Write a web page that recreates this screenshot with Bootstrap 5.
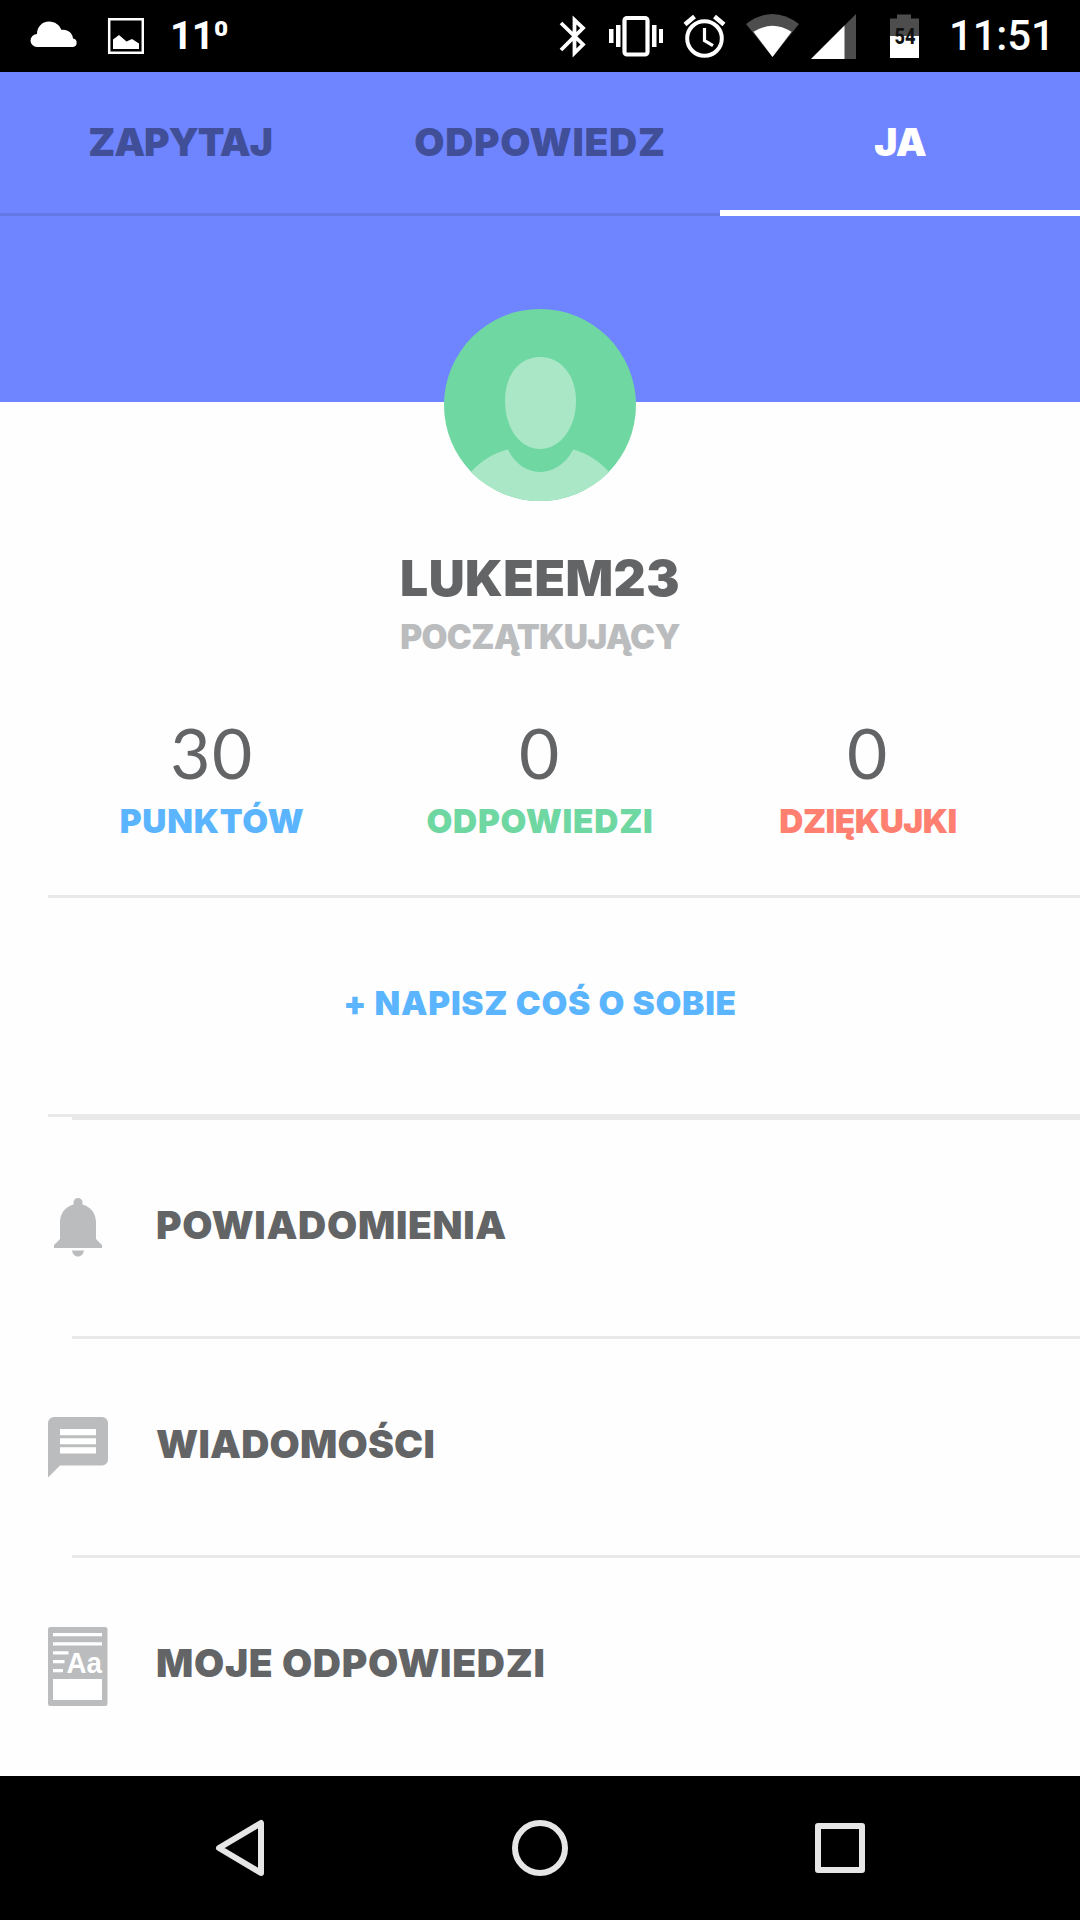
<!DOCTYPE html>
<html lang="pl">
<head>
<meta charset="utf-8">
<meta name="viewport" content="width=device-width, initial-scale=1">
<title>Profil</title>
<link href="https://cdn.jsdelivr.net/npm/bootstrap@5.3.0/dist/css/bootstrap.min.css" rel="stylesheet">
<style>
  body { font-family: "Inter", "Liberation Sans", sans-serif; background: #fefefe; color: #636466; }
  svg { display: block; flex: none; }
  .screen { width: 1080px; height: 1920px; overflow: hidden; }
  .statusbar { height: 72px; font-family: "Roboto", sans-serif; color: #fff; }
  .temp { font-size: 39.5px; font-weight: 700; line-height: 74px; margin-left: 26px; letter-spacing: -.8px; }
  .clock { font-size: 42px; font-weight: 500; line-height: 76px; margin-left: 29px; width: 103px; letter-spacing: -.2px; }
  .hero { height: 330px; background: #6f85ff; }
  .tabs-top { height: 144px; }
  .tabs-top .nav-link { height: 144px; padding: 0; line-height: 139px; font-size: 39px; font-weight: 900; color: #414f99; border-radius: 0; box-shadow: inset 0 -3px #6377e5; letter-spacing: -1.1px; }
  .tabs-top .nav-link.wide-caps { letter-spacing: .7px; }
  .tabs-top .nav-link.active { color: #fff; box-shadow: inset 0 -6px #fff; }
  .avatar { margin-top: -93px; }
  .user-name { font-size: 49.8px; font-weight: 900; line-height: 60px; margin: 47px 0 0; letter-spacing: .5px; }
  .user-rank { font-size: 33.6px; font-weight: 900; line-height: 40px; margin-top: 9px; color: #bbbcbe; letter-spacing: -.75px; }
  .stats { margin: 45px 48px 0; height: 193px; }
  .stat-num { font-family: "Lato", sans-serif; font-size: 69.5px; line-height: 100px; letter-spacing: 1.5px; }
  .stat-label { font-size: 33.4px; font-weight: 900; line-height: 40px; margin-top: -1px; letter-spacing: .75px; }
  .c-blue { color: #5bb5fe; } .c-green { color: #6fd7a2; } .c-red { color: #ff7f70; }
  .stat-label.c-red { letter-spacing: -.5px; }
  .about { margin-left: 48px; border-top: 3px solid #e9e9e9; border-bottom: 3px solid #e9e9e9; height: 222px; padding: 0 48px 5px 0; font-size: 33.4px; font-weight: 900; letter-spacing: .75px; }
  .menu-row { height: 216px; padding-left: 48px; }
  .menu-rule { height: 3px; margin-left: 72px; background: #e9e9e9; }
  .menu-icon { width: 60px; margin-right: 48px; }
  .menu-text { font-size: 39px; font-weight: 900; padding-bottom: 6px; letter-spacing: .7px; }
  .menu-text.snug { letter-spacing: .2px; }
  .navbar-keys { height: 144px; padding: 0 212px; }
</style>
</head>
<body>
<div class="screen d-flex flex-column">
  <div class="statusbar bg-black d-flex align-items-center">
    <svg width="144" height="72" viewBox="0 0 144 72">
      <path fill="#fff" d="M37 47a6.500 6.500 0 0 1 0-13C37 27 42 21.500 49 21.500c6 0 10.500 3.500 12.500 8.500 6-1 11 3 11.500 8.500a4.300 4.300 0 0 1 0 8.500z"/>
      <path fill="none" stroke="#fff" stroke-width="2.500" d="M109.200 19.200h33.600v33.600h-33.600z"/>
      <path fill="#fff" d="M113 49v-9.500l6-4.500 7.500 6.500 5.500-2.500 7 4.500V49z"/>
    </svg>
    <span class="temp">11⁰</span>
    <svg class="ms-auto" width="372" height="72" viewBox="548 0 372 72">
      <path fill="none" stroke="#fff" stroke-width="3.800" d="m561 23 22 21.500-8.500 8.500V20l8.500 8-22 22"/>
      <rect x="624.500" y="18" width="23" height="36.500" rx="2.500" fill="none" stroke="#fff" stroke-width="4.200"/>
      <path fill="#fff" d="M609 29h4.500v14H609zM616 25h4.500v22H616zM652 25h4.500v22H652zM659 29h4v14h-4z"/>
      <circle cx="704.500" cy="38.500" r="17.300" fill="none" stroke="#fff" stroke-width="4"/>
      <path fill="none" stroke="#fff" stroke-width="3.200" d="M704.500 28v12.500l8.500 5.200"/>
      <path stroke="#fff" stroke-width="4.600" d="m685 24.500 9.500-8M724 24.500l-9.500-8"/>
      <path fill="#4d4d4d" d="M746 24q26.500-20 53 0l-26.500 33z"/>
      <path fill="#fff" d="M753.500 31.800q19-12 38 0L772.500 57z"/>
      <path fill="#4d4d4d" d="M856 14v45h-45z"/>
      <path fill="#fff" d="M844.500 25.500V59H811z"/>
      <path fill="#4d4d4d" d="M890 18.500h7v-4h14v4h8V36h-29z"/>
      <path fill="#fff" d="M890 36h29v22h-29z"/>
      <text x="905" y="44" text-anchor="middle" font-family="Roboto" font-weight="800" font-size="21.500" textLength="21" lengthAdjust="spacingAndGlyphs" fill="#111">54</text>
    </svg>
    <span class="clock text-nowrap">11:51</span>
    <span class="pe-4 me-1"></span>
  </div>

  <header class="hero">
    <nav class="tabs-top nav nav-fill row g-0">
      <a class="nav-link col-4 text-center">ZAPYTAJ</a>
      <a class="nav-link col-4 text-center wide-caps">ODPOWIEDZ</a>
      <a class="nav-link col-4 text-center active">JA</a>
    </nav>
  </header>

  <section class="text-center">
    <svg class="avatar position-relative mx-auto" width="192" height="192" viewBox="0 0 192 192">
      <defs><clipPath id="disc"><circle cx="96" cy="96" r="96"/></clipPath></defs>
      <circle cx="96" cy="96" r="96" fill="#6fd7a2"/>
      <g fill="#a9e7c6" clip-path="url(#disc)">
        <path d="M96 48c20 0 36 17 36 44 0 27-16 48-36 48S61 119 61 92c0-27 15-44 35-44z"/>
        <path d="M27 163c10-11 22-19 37-22.500 6 13 18 22.500 32 22.500s27-9.500 33-22.500c14 3.500 26 11.500 36 22.500v30H27z"/>
      </g>
    </svg>
    <h1 class="user-name">LUKEEM23</h1>
    <div class="user-rank">POCZĄTKUJĄCY</div>
    <div class="stats row g-0">
      <div class="col-4"><div class="stat-num">30</div><div class="stat-label c-blue">PUNKTÓW</div></div>
      <div class="col-4"><div class="stat-num">0</div><div class="stat-label c-green">ODPOWIEDZI</div></div>
      <div class="col-4"><div class="stat-num">0</div><div class="stat-label c-red">DZIĘKUJKI</div></div>
    </div>
  </section>

  <div class="about c-blue d-flex align-items-center justify-content-center">+ NAPISZ COŚ O SOBIE</div>

  <main class="flex-grow-1">
    <div class="menu-rule"></div>
    <div class="menu-row d-flex align-items-center">
      <div class="menu-icon"><svg width="60" height="60" viewBox="0 0 60 60" fill="#bbbcbe"><path d="M30 0a4.500 4.500 0 0 1 4.500 4.500v2C42.500 8.500 48 15.500 48 24v17l6 6v3H6v-3l6-6V24c0-8.500 5.500-15.500 13.500-17.500v-2A4.500 4.500 0 0 1 30 0zM24 52.500h12c-.6 3.700-3 6-6 6s-5.400-2.300-6-6z"/></svg></div>
      <span class="menu-text">POWIADOMIENIA</span>
    </div>
    <div class="menu-rule"></div>
    <div class="menu-row d-flex align-items-center">
      <div class="menu-icon"><svg width="60" height="61" viewBox="0 0 60 61"><path fill="#bbbcbe" d="M6 0h48a6 6 0 0 1 6 6v36.500a6 6 0 0 1-6 6H12L0 60.500V6a6 6 0 0 1 6-6z"/><path fill="#fff" d="M12 12h36v6.200H12zM12 21.200h36v6H12zM12 30.200h36v6.200H12z"/></svg></div>
      <span class="menu-text snug">WIADOMOŚCI</span>
    </div>
    <div class="menu-rule"></div>
    <div class="menu-row d-flex align-items-center">
      <div class="menu-icon"><svg width="60" height="79" viewBox="0 0 60 79"><rect width="59.500" height="79" rx="2.500" fill="#bbbcbe"/><path fill="#fff" d="M5 6h49v3.200H5zM5 15.200h49v3.200H5zM5 24.300h15.500v3.200H5zM5 33h11.500v3.200H5zM5 42h10v3.200H5zM5 52h49v21H5z"/><text x="18.500" y="45.500" font-family="Liberation Sans" font-weight="700" font-size="29" textLength="35.500" lengthAdjust="spacingAndGlyphs" fill="#fff">Aa</text></svg></div>
      <span class="menu-text">MOJE ODPOWIEDZI</span>
    </div>
  </main>

  <footer class="navbar-keys bg-black d-flex align-items-center justify-content-between">
    <svg width="56" height="60" viewBox="0 0 56 60"><path fill="none" stroke="#e6e6e6" stroke-width="6" stroke-linejoin="round" d="M49 5v50L7 30z"/></svg>
    <svg width="56" height="60" viewBox="0 0 56 60"><circle cx="28" cy="30" r="25" fill="none" stroke="#e6e6e6" stroke-width="6"/></svg>
    <svg width="56" height="60" viewBox="0 0 56 60"><rect x="6" y="8" width="44" height="44" fill="none" stroke="#e6e6e6" stroke-width="6" stroke-linejoin="round"/></svg>
  </footer>
</div>
<script src="https://cdn.jsdelivr.net/npm/bootstrap@5.3.0/dist/js/bootstrap.bundle.min.js"></script>
</body>
</html>
